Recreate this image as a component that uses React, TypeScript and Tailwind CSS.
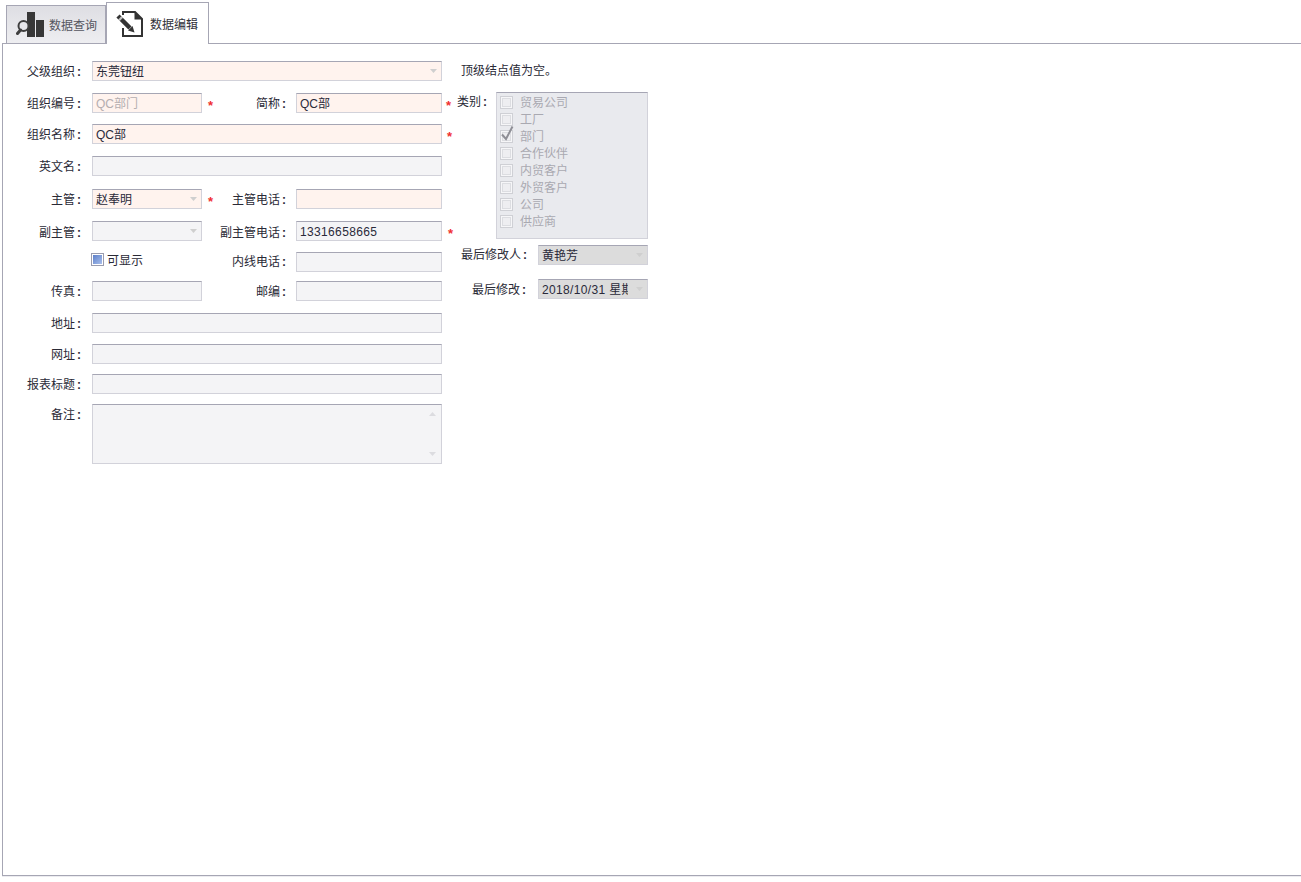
import React from "react";

const inputBorder = "border border-[#d2d2da] border-t-[#a6a6b4]";

function Arrow({ color = "#cfcfcf", up = false }: { color?: string; up?: boolean }) {
  return (
    <svg width="7" height="4" viewBox="0 0 7 4" className="shrink-0">
      <polygon points={up ? "3.5,0 7,4 0,4" : "0,0 7,0 3.5,4"} fill={color} />
    </svg>
  );
}

function Label({ text, className = "", lead = "leading-[22px]" }: { text: string; className?: string; lead?: string }) {
  return (
    <div className={`flex justify-end shrink-0 h-[20px] whitespace-nowrap text-[12px] text-[#2a2a36] ${lead} ${className}`}>
      <span>{text}</span>
      <span className="w-[8px] text-center font-bold">:</span>
    </div>
  );
}

function Star({ className = "" }: { className?: string }) {
  return <span className={`h-[20px] leading-[25px] text-[13px] font-bold text-[#f03030] ${className}`}>*</span>;
}

function Input({
  w,
  tone = "gray",
  value,
  muted = false,
  combo = false,
  spaced = false,
}: {
  w: string;
  tone?: "pink" | "gray" | "dark";
  value?: string;
  muted?: boolean;
  combo?: boolean;
  spaced?: boolean;
}) {
  const bg = tone === "pink" ? "bg-[#fff3ee]" : tone === "dark" ? "bg-[#dcdcdc]" : "bg-[#f4f4f6]";
  return (
    <div className={`${w} ${bg} ${inputBorder} h-[20px] shrink-0 flex items-center pl-[3px] overflow-hidden`}>
      <div
        className={`flex-1 min-w-0 mr-[3px] pt-[1px] whitespace-nowrap overflow-hidden text-[12px] leading-[18px] ${
          spaced ? "tracking-[0.35px]" : ""
        } ${muted ? "text-[#b4aeb0]" : "text-[#2a2a3a]"}`}
      >
        {value}
      </div>
      {combo && (
        <div className="w-[16px] shrink-0 flex justify-center">
          <Arrow />
        </div>
      )}
    </div>
  );
}

function Category({ text, checked = false }: { text: string; checked?: boolean }) {
  return (
    <div className="h-[17px] flex items-center">
      <div className="relative w-[13px] h-[13px] border border-[#cfd0d5] bg-[#f6f6f8] shrink-0 flex items-center justify-center">
        <div className="w-[9px] h-[9px] border border-[#dcdde1] bg-[#eeeef1]" />
        {checked && (
          <svg width="16" height="17" viewBox="0 0 16 17" className="absolute left-[-1px] top-[-6px]">
            <path d="M2 9.5 L6 14 L12.5 1.5" fill="none" stroke="#8f8f96" strokeWidth="2" />
          </svg>
        )}
      </div>
      <span className="ml-[7px] text-[12px] text-[#a9a9b1]">{text}</span>
    </div>
  );
}

export default function App() {
  return (
    <div className="w-[1301px] h-[882px] bg-white overflow-hidden font-['Liberation_Sans','Noto_Sans_CJK_SC',sans-serif] text-[12px] pl-[2px] pt-[2px]">
      <div className="flex items-end h-[41px] pl-[4px]">
        <div className="w-[100px] h-[39px] -mb-px border border-[#a6a6b4] bg-gradient-to-b from-[#dedee3] to-[#eeeef1] flex items-center">
          <svg width="30" height="28" viewBox="0 0 30 28" className="ml-[9px] mt-[3px] shrink-0">
            <rect x="11" y="0" width="8" height="25" fill="#373737" />
            <rect x="20" y="8" width="8" height="17" fill="#373737" />
            <circle cx="7.5" cy="14" r="5" fill="#e6e6ea" stroke="#3f3f3f" strokeWidth="2" />
            <path d="M4.5 18 L1.5 21.5" stroke="#3f3f3f" strokeWidth="3" strokeLinecap="round" />
          </svg>
          <span className="ml-[3px] mt-[2px] text-[12px] text-[#55555f]">数据查询</span>
        </div>
        <div className="relative z-10 w-[103px] h-[42px] -mb-px border border-[#a6a6b4] border-b-0 bg-white flex items-center">
          <svg width="28" height="28" viewBox="0 0 28 28" className="ml-[9px] shrink-0">
            <path d="M7 5 V2 H19 L26 9 V26 H7 V18" fill="none" stroke="#333" strokeWidth="2" />
            <path d="M18.5 2 V9.5 H26 Z" fill="#333" />
            <path d="M2 6 L14 18" stroke="#333" strokeWidth="4.5" />
            <path d="M3.8 7.8 L5.4 9.4" stroke="#fff" strokeWidth="4.5" strokeOpacity="0.7" />
            <path d="M12 20.5 L16.5 16 L18.5 22.5 Z" fill="#333" />
          </svg>
          <span className="ml-[6px] mt-[2px] text-[12px] text-[#303038]">数据编辑</span>
        </div>
      </div>

      <div className="w-[1310px] h-[833px] border border-[#a6a6b4] pt-[17px] flex items-start">
        <div className="w-[454px] shrink-0 flex flex-col">
          <div className="flex">
            <Label text="父级组织" className="w-[80px]" />
            <div className="ml-[9px]">
              <Input w="w-[350px]" tone="pink" value="东莞钮纽" combo />
            </div>
          </div>

          <div className="flex mt-[12px]">
            <Label text="组织编号" className="w-[80px]" />
            <div className="ml-[9px]">
              <Input w="w-[110px]" tone="pink" value="QC部门" muted />
            </div>
            <Star className="ml-[6px] w-[10px]" />
            <Label text="简称" className="w-[70px]" />
            <div className="ml-[8px]">
              <Input w="w-[146px]" tone="pink" value="QC部" />
            </div>
            <Star className="ml-[4px]" />
          </div>

          <div className="flex mt-[11px]">
            <Label text="组织名称" className="w-[80px]" />
            <div className="ml-[9px]">
              <Input w="w-[350px]" tone="pink" value="QC部" />
            </div>
            <Star className="ml-[5px]" />
          </div>

          <div className="flex mt-[12px]">
            <Label text="英文名" className="w-[80px]" />
            <div className="ml-[9px]">
              <Input w="w-[350px]" />
            </div>
          </div>

          <div className="flex mt-[13px]">
            <Label text="主管" className="w-[80px]" />
            <div className="ml-[9px]">
              <Input w="w-[110px]" tone="pink" value="赵奉明" combo />
            </div>
            <Star className="ml-[6px] w-[10px]" />
            <Label text="主管电话" className="w-[70px]" />
            <div className="ml-[8px]">
              <Input w="w-[146px]" tone="pink" />
            </div>
          </div>

          <div className="flex mt-[12px]">
            <Label text="副主管" className="w-[80px]" lead="leading-[24px]" />
            <div className="ml-[9px]">
              <Input w="w-[110px]" combo />
            </div>
            <div className="w-[16px]" />
            <Label text="副主管电话" className="w-[70px]" lead="leading-[24px]" />
            <div className="ml-[8px]">
              <Input w="w-[146px]" value="13316658665" spaced />
            </div>
            <Star className="ml-[6px]" />
          </div>

          <div className="flex mt-[11px]">
            <div className="w-[215px] shrink-0 flex items-start pl-[88px] pt-[1px]">
              <div className="w-[13px] h-[13px] border border-[#9a9cae] bg-white p-[1px] shrink-0">
                <div className="w-full h-full bg-gradient-to-br from-[#5d7fc8] to-[#a9bfec]" />
              </div>
              <span className="ml-[3px] leading-[17px] text-[#2a2a36] text-[12px]">可显示</span>
            </div>
            <Label text="内线电话" className="w-[70px]" lead="leading-[20px]" />
            <div className="ml-[8px]">
              <Input w="w-[146px]" />
            </div>
          </div>

          <div className="flex mt-[9px]">
            <Label text="传真" className="w-[80px]" />
            <div className="ml-[9px]">
              <Input w="w-[110px]" />
            </div>
            <div className="w-[16px]" />
            <Label text="邮编" className="w-[70px]" />
            <div className="ml-[8px]">
              <Input w="w-[146px]" />
            </div>
          </div>

          <div className="flex mt-[12px]">
            <Label text="地址" className="w-[80px]" />
            <div className="ml-[9px]">
              <Input w="w-[350px]" />
            </div>
          </div>

          <div className="flex mt-[11px]">
            <Label text="网址" className="w-[80px]" />
            <div className="ml-[9px]">
              <Input w="w-[350px]" />
            </div>
          </div>

          <div className="flex mt-[10px]">
            <Label text="报表标题" className="w-[80px]" />
            <div className="ml-[9px]">
              <Input w="w-[350px]" />
            </div>
          </div>

          <div className="flex mt-[10px]">
            <Label text="备注" className="w-[80px]" />
            <div className={`ml-[9px] w-[350px] h-[60px] bg-[#f4f4f6] ${inputBorder} flex flex-col justify-between items-end pt-[7px] pb-[7px] pr-[5px]`}>
              <Arrow up color="#dcdce0" />
              <Arrow color="#dcdce0" />
            </div>
          </div>
        </div>

        <div className="flex flex-col">
          <div className="h-[20px] leading-[20px] pl-[4px] text-[12px] text-[#2a2a36]">顶级结点值为空。</div>

          <div className="flex mt-[11px]">
            <Label text="类别" className="w-[32px]" lead="leading-[20px]" />
            <div className="ml-[7px] w-[152px] h-[147px] bg-[#e9eaee] border border-[#d2d2da] border-t-[#a6a6b4] pt-[1px] pl-[3px]">
              <Category text="贸易公司" />
              <Category text="工厂" />
              <Category text="部门" checked />
              <Category text="合作伙伴" />
              <Category text="内贸客户" />
              <Category text="外贸客户" />
              <Category text="公司" />
              <Category text="供应商" />
            </div>
          </div>

          <div className="flex mt-[6px]">
            <Label text="最后修改人" className="w-[72px]" lead="leading-[20px]" />
            <div className="ml-[9px]">
              <Input w="w-[110px]" tone="dark" value="黄艳芳" combo />
            </div>
          </div>

          <div className="flex mt-[14px]">
            <Label text="最后修改" className="w-[71px]" />
            <div className="ml-[10px]">
              <Input w="w-[110px]" tone="dark" value="2018/10/31 星期" combo spaced />
            </div>
          </div>
        </div>
      </div>
      <div className="h-[1px] bg-[#ececf0] w-full" />
    </div>
  );
}
